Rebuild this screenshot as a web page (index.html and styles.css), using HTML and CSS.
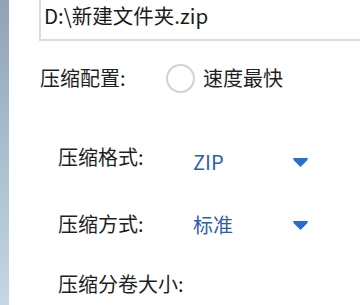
FILE: index.html
```html
<!DOCTYPE html>
<html lang="zh-CN">
<head>
    <meta charset="UTF-8">
    <meta name="viewport" content="width=device-width, initial-scale=1.0">
    <title>压缩配置</title>
    <link rel="stylesheet" href="styles.css">
</head>
<body>
    <div class="window">
        <div class="strip"></div>
        <div class="content">
            <div class="pathBox">D:\新建文件夹.zip</div>

            <div class="configRow">
                <span class="configLabel">压缩配置:</span>
                <span class="radio"></span>
                <span class="radioText">速度最快</span>
            </div>

            <div class="optionRow formatRow">
                <span class="optionLabel">压缩格式:</span>
                <span class="select">
                    <span class="selectValue">ZIP</span>
                    <svg class="arrow" width="15" height="9" viewBox="0 0 15 9">
                        <polygon points="0,0 15,0 14,2.5 7.5,9 1,2.5" fill="#2a6dd2"/>
                    </svg>
                </span>
            </div>

            <div class="optionRow methodRow">
                <span class="optionLabel">压缩方式:</span>
                <span class="select">
                    <span class="selectValue">标准</span>
                    <svg class="arrow" width="15" height="9" viewBox="0 0 15 9">
                        <polygon points="0,0 15,0 14,2.5 7.5,9 1,2.5" fill="#2a6dd2"/>
                    </svg>
                </span>
            </div>

            <div class="optionRow volumeRow">
                <span class="optionLabel">压缩分卷大小:</span>
            </div>
        </div>
    </div>
</body>
</html>
```

FILE: styles.css
```css
/* Base */
body {
    margin: 0;
    background-color: #ffffff;
    font-family: "Noto Sans CJK SC", "Noto Sans", sans-serif;
    font-size: 20px;
    color: #1f1f1f;
}

.window {
    display: flex;
    height: 305px;
    overflow: hidden;
}

/* Left edge of the desktop behind the window */
.strip {
    width: 9px;
    flex-shrink: 0;
    background: linear-gradient(#8fa3b4, #a9bfcf 50%, #c3d7e5);
}

.content {
    flex: 1;
    background-color: #ffffff;
}

/* Output file path box, cut off at the top */
.pathBox {
    height: 41px;
    margin-left: 30px;
    padding: 5px 0 0 3px;
    box-sizing: border-box;
    line-height: 20px;
    font-size: 20.5px;
    border-left: 2px solid #d6dde3;
    border-bottom: 2px solid #d6dde3;
    color: #1a1a1a;
}

/* Compression config row */
.configRow {
    display: flex;
    align-items: center;
    height: 30px;
    margin-top: 22px;
    padding-left: 31px;
    line-height: 20px;
}

.configLabel {
    width: 126px;
}

.radio {
    width: 25px;
    height: 25px;
    border: 2px solid #d2d2d2;
    border-radius: 50%;
}

.radioText {
    margin-left: 8px;
}

/* Format / method / volume rows */
.optionRow {
    display: flex;
    align-items: center;
    height: 20px;
    line-height: 20px;
    padding-left: 49px;
}

.formatRow {
    margin-top: 54px;
}

.methodRow {
    margin-top: 47px;
}

.volumeRow {
    margin-top: 40px;
}

.optionLabel {
    width: 135px;
}

.select {
    display: flex;
    align-items: center;
    width: 116px;
}

.selectValue {
    width: 100px;
    color: #2f5ea9;
}

/* the format drop-down sits a little lower than its label */
.formatRow .select {
    margin-top: 10px;
}

.methodRow .select {
    margin-top: 2px;
}

.arrow {
    display: block;
}
```
